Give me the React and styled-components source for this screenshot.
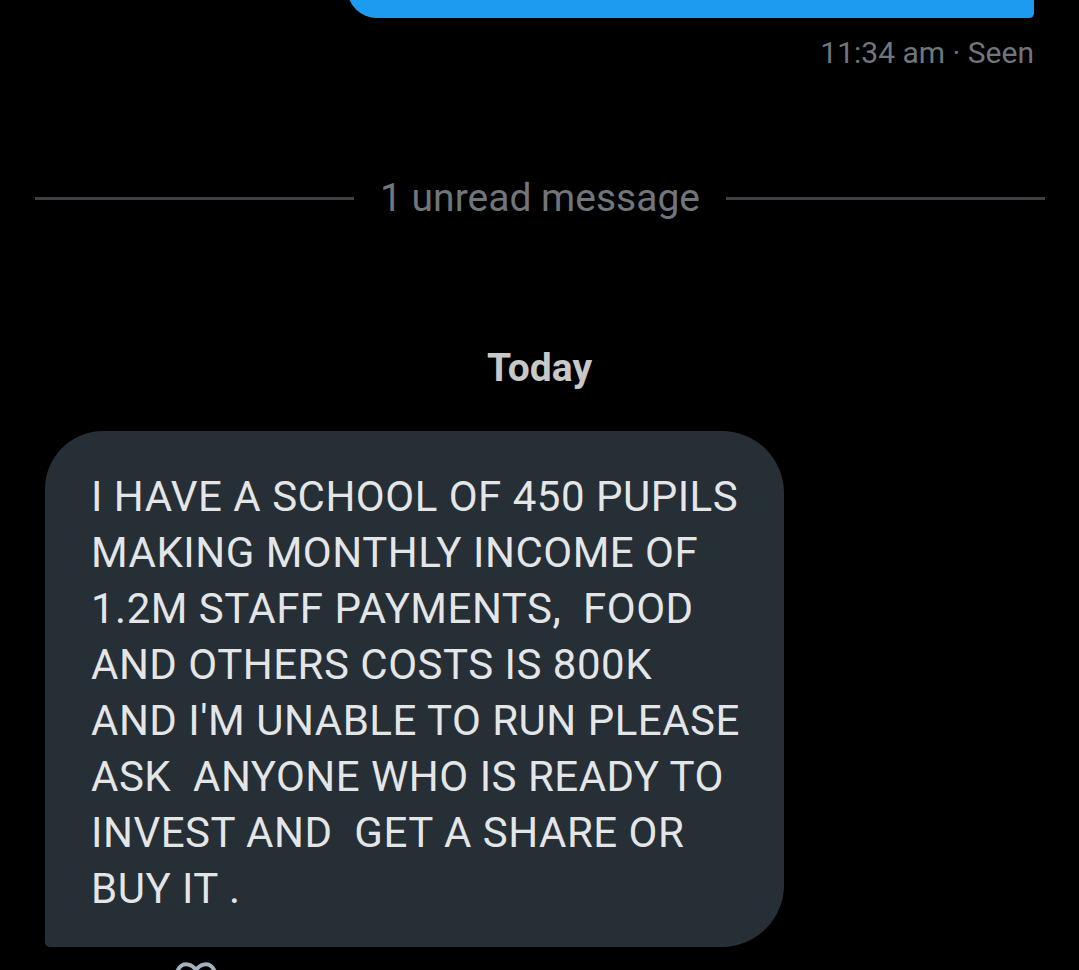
import React from "react";
import styled, { createGlobalStyle } from "styled-components";

const GlobalStyle = createGlobalStyle`
  html, body {
    margin: 0;
    padding: 0;
    background: #000;
  }
  body {
    font-family: Roboto, "Liberation Sans", sans-serif;
    overflow: hidden;
  }
`;

const Viewport = styled.div`
  height: 970px;
  overflow: hidden;
  background: #000;
`;

const Thread = styled.div`
  padding: 0 45px;
  display: flex;
  flex-direction: column;
  & > * {
    flex-shrink: 0;
  }
`;

const OutgoingBubble = styled.div`
  align-self: flex-end;
  width: 687px;
  height: 60px;
  margin-top: -42px;
  background: #1d9bf0;
  border-radius: 32px 32px 5px 32px;
`;

const Meta = styled.div`
  align-self: flex-end;
  margin-top: 17px;
  font-size: 30px;
  line-height: 36px;
  color: #71767b;
`;

const Divider = styled.div`
  display: flex;
  align-items: center;
  gap: 26px;
  margin: 105px -11px 0 -10px;
`;

const Line = styled.div`
  flex: 1;
  height: 3px;
  background: #3e4144;
`;

const DividerLabel = styled.span`
  font-size: 39px;
  line-height: 44px;
  color: #71767b;
`;

const DayLabel = styled.div`
  align-self: center;
  margin-top: 126px;
  font-size: 39px;
  line-height: 44px;
  font-weight: 700;
  color: #c8c8c8;
`;

const IncomingBubble = styled.div`
  width: 739px;
  box-sizing: border-box;
  margin-top: 41px;
  padding: 38px 20px 30px 46px;
  background: #262e36;
  border-radius: 58px 62px 62px 5px;
  color: #e3e5e7;
  font-size: 42px;
  letter-spacing: 0.5px;
  line-height: 56px;
  white-space: pre;
`;

const Reaction = styled.div`
  margin: 15px 0 0 130px;
  width: 42px;
  height: 40px;
  color: #a4b3c0;
`;

const message = [
  "I HAVE A SCHOOL OF 450 PUPILS",
  "MAKING MONTHLY INCOME OF",
  "1.2M STAFF PAYMENTS,  FOOD",
  "AND OTHERS COSTS IS 800K",
  "AND I'M UNABLE TO RUN PLEASE",
  "ASK  ANYONE WHO IS READY TO",
  "INVEST AND  GET A SHARE OR",
  "BUY IT .",
].join("\n");

export default function App() {
  return (
    <>
      <GlobalStyle />
      <Viewport>
        <Thread>
          <OutgoingBubble />
          <Meta>11:34 am · Seen</Meta>
          <Divider>
            <Line />
            <DividerLabel>1 unread message</DividerLabel>
            <Line />
          </Divider>
          <DayLabel>Today</DayLabel>
          <IncomingBubble>{message}</IncomingBubble>
          <Reaction>
            <svg width="42" height="40" viewBox="0 0 42 40" fill="none">
              <path
                d="M21 8 C17 2 10 1 6 4 C1 8 1 15 5 20 C9 25 15 30 21 36 C27 30 33 25 37 20 C41 15 41 8 36 4 C32 1 25 2 21 8 Z"
                stroke="currentColor"
                strokeWidth="4"
                strokeLinejoin="round"
              />
            </svg>
          </Reaction>
        </Thread>
      </Viewport>
    </>
  );
}
